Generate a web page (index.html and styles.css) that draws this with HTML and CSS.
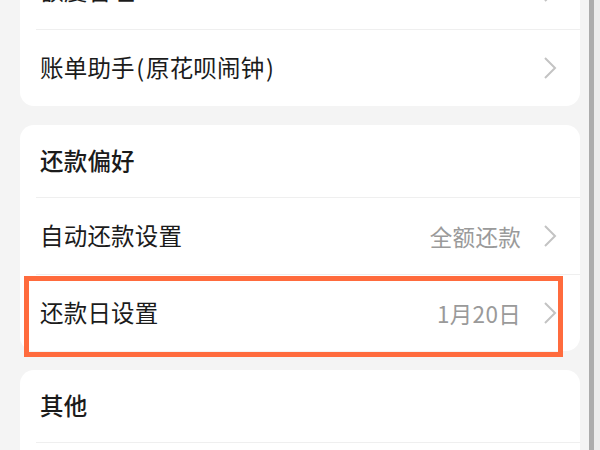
FILE: index.html
```html
<!DOCTYPE html>
<html lang="zh-CN">
<head>
<meta charset="utf-8">
<link rel="stylesheet" href="styles.css">
</head>
<body>
<div class="screen">
  <main class="page">
    <section class="card card-first">
      <div class="row">
        <span class="label">额度管理</span>
        <span class="trail"><svg class="chev" viewBox="0 0 14 24" width="14" height="24"><polyline points="2,2 12,12 2,22"/></svg></span>
      </div>
      <div class="row">
        <span class="label">账单助手<span class="paren">(</span>原花呗闹钟<span class="paren">)</span></span>
        <span class="trail"><svg class="chev" viewBox="0 0 14 24" width="14" height="24"><polyline points="2,2 12,12 2,22"/></svg></span>
      </div>
    </section>

    <section class="card">
      <div class="row head"><span class="label">还款偏好</span></div>
      <div class="row">
        <span class="label">自动还款设置</span>
        <span class="trail"><span class="value">全额还款</span><svg class="chev" viewBox="0 0 14 24" width="14" height="24"><polyline points="2,2 12,12 2,22"/></svg></span>
      </div>
      <div class="row">
        <span class="label">还款日设置</span>
        <span class="trail"><span class="value">1月20日</span><svg class="chev" viewBox="0 0 14 24" width="14" height="24"><polyline points="2,2 12,12 2,22"/></svg></span>
      </div>
    </section>

    <section class="card">
      <div class="row head"><span class="label">其他</span></div>
      <div class="row"><span class="label">&nbsp;</span></div>
    </section>
  </main>
  <div class="edge"><div class="edge-bar"></div><div class="edge-rim"></div></div>
  <div class="highlight"></div>
</div>
</body>
</html>
```

FILE: styles.css
```css
html, body {
  margin: 0;
  padding: 0;
}

body {
  font-family: "Noto Sans CJK SC", "Noto Sans", sans-serif;
  background: #f4f4f4;
  color: #1b1b1b;
}

.screen {
  position: relative;
  width: 600px;
  height: 450px;
  overflow: hidden;
  display: flex;
  align-items: flex-start;
}

.page {
  flex: 1;
  padding: 0 9px 0 20px;
  display: flex;
  flex-direction: column;
  gap: 19px;
  margin-top: -47px;
  background: #f4f4f4;
}

.card {
  flex-shrink: 0;
  background: #ffffff;
  border-radius: 14px;
  overflow: hidden;
}

.row {
  flex-shrink: 0;
  height: 76px;
  display: flex;
  align-items: center;
  justify-content: space-between;
  padding: 0 23px 0 4px;
  margin-left: 16px;
  border-top: 1px solid #efefef;
}

.row:first-child {
  border-top: none;
}

.row.head {
  height: 72px;
}

.label {
  font-size: 23.5px;
  line-height: 1;
  letter-spacing: 0.2px;
}

.paren {
  margin: 0 1.5px;
}

.head .label {
  font-weight: 500;
}

.trail {
  display: flex;
  align-items: center;
  gap: 22px;
}

.value {
  font-size: 22.5px;
  color: #9a9a9a;
  line-height: 1;
  letter-spacing: 0.3px;
}

.chev {
  display: block;
  fill: none;
  stroke: #c3c3c3;
  stroke-width: 2;
}

.edge {
  width: 11px;
  height: 450px;
  display: flex;
}

.edge-bar {
  width: 5px;
  background: #acacac;
}

.edge-rim {
  flex: 1;
  background: #ececec;
}

.highlight {
  position: absolute;
  left: 24px;
  top: 276px;
  width: 529px;
  height: 71px;
  border: 5px solid #ff6b3d;
}
```
